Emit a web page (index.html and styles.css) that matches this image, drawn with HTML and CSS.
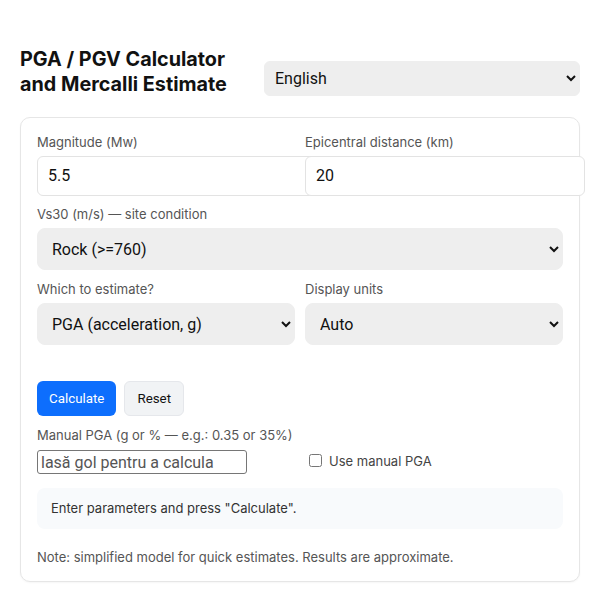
FILE: index.html
```html
<!DOCTYPE html>
<html lang="en">
<head>
<meta charset="utf-8">
<title>PGA / PGV Calculator and Mercalli Estimate</title>
<link rel="stylesheet" href="styles.css">
</head>
<body>
<div class="page">
  <header class="header">
    <h1 class="title">PGA / PGV Calculator and Mercalli Estimate</h1>
    <select class="select lang">
      <option>English</option>
    </select>
  </header>

  <main class="card">
    <div class="grid2">
      <div class="field">
        <label class="label">Magnitude (Mw)</label>
        <input class="input" type="text" value="5.5">
      </div>
      <div class="field">
        <label class="label">Epicentral distance (km)</label>
        <input class="input" type="text" value="20">
      </div>
    </div>

    <div class="field gap-top">
      <label class="label">Vs30 (m/s) — site condition</label>
      <select class="select"><option>Rock (&gt;=760)</option></select>
    </div>

    <div class="grid2 gap-top2">
      <div class="field">
        <label class="label">Which to estimate?</label>
        <select class="select"><option>PGA (acceleration, g)</option></select>
      </div>
      <div class="field">
        <label class="label">Display units</label>
        <select class="select"><option>Auto</option></select>
      </div>
    </div>

    <div class="actions">
      <button class="btn btn-primary" type="button">Calculate</button>
      <button class="btn btn-light" type="button">Reset</button>
    </div>

    <div class="manual">
      <label class="label manual-label">Manual PGA (g or % — e.g.: 0.35 or 35%)</label>
      <input class="manual-input" type="text" placeholder="lasă gol pentru a calcula">
      <label class="check"><input type="checkbox" class="checkbox"> Use manual PGA</label>
    </div>

    <div class="result">Enter parameters and press "Calculate".</div>

    <p class="note">Note: simplified model for quick estimates. Results are approximate.</p>
  </main>
</div>
</body>
</html>
```

FILE: styles.css
```css
* { box-sizing: border-box; }

body {
  margin: 0;
  background: #ffffff;
  color: #111111;
  font-family: Inter, "Noto Sans", "DejaVu Sans", sans-serif;
}

.page {
  padding: 47px 20px 20px 20px;
}

.header {
  display: flex;
  align-items: flex-start;
  gap: 12px;
  margin-bottom: 20px;
}

.title {
  flex: 1;
  margin: 0;
  font-size: 19.8px;
  line-height: 25px;
  font-weight: 700;
  color: #111111;
}

.select {
  font-family: Roboto, "Liberation Sans", sans-serif;
  font-size: 16px;
  color: #111111;
  background-color: #eeeeee;
  border: 1px solid #eeeeee;
  border-radius: 8px;
  height: 42px;
  padding: 0 10px 0 10px;
  width: 100%;
}

.lang {
  width: 316px;
  height: 35px;
  margin-top: 14px;
  padding-left: 6px;
  border-radius: 6px;
}

.card {
  display: block;
  background: #ffffff;
  border: 1px solid #e6e6e6;
  border-radius: 10px;
  padding: 16px;
  box-shadow: 0 1px 2px rgba(0, 0, 0, 0.04);
}

.grid2 {
  display: grid;
  grid-template-columns: 1fr 1fr;
  column-gap: 10px;
}

.field {
  display: flex;
  flex-direction: column;
  min-width: 0;
}

.gap-top {
  margin-top: 10px;
}

.gap-top2 {
  margin-top: 11px;
}

.label {
  display: block;
  font-size: 13px;
  line-height: 16px;
  color: #555555;
  margin-bottom: 6px;
}

.input {
  box-sizing: content-box;
  width: 100%;
  font-family: Roboto, "Liberation Sans", sans-serif;
  font-size: 16px;
  line-height: 18px;
  color: #111111;
  padding: 10px;
  border: 1px solid #e3e3e3;
  border-radius: 6px;
  background: #ffffff;
}

.actions {
  display: flex;
  gap: 8px;
  margin-top: 36px;
}

.btn {
  font-family: Roboto, "Liberation Sans", sans-serif;
  font-size: 13.333px;
  line-height: 15px;
  border-radius: 6px;
  cursor: pointer;
}

.btn-primary {
  background: #0d6efd;
  border: 0;
  padding: 10px 12px;
  color: #ffffff;
}

.btn-light {
  background: #f1f3f5;
  border: 1px solid #e5e7eb;
  padding: 9px 12px;
  color: #111111;
}

.manual {
  display: grid;
  grid-template-columns: 1fr 1fr;
  column-gap: 10px;
  margin-top: 11px;
}

.manual-label {
  grid-column: 1 / 2;
  margin-bottom: 7px;
  white-space: nowrap;
}

.manual-input {
  grid-column: 1 / 2;
  grid-row: 2;
  width: 210px;
  height: 24px;
  font-family: Roboto, "Liberation Sans", sans-serif;
  font-size: 16px;
  color: #111111;
  padding: 1px 3px;
  border: 1px solid #767676;
  border-radius: 3px;
}

.manual-input::placeholder {
  color: #555555;
}

.check {
  grid-column: 2;
  grid-row: 2;
  align-self: center;
  display: flex;
  align-items: center;
  font-size: 13px;
  color: #444444;
  margin-top: -3px;
}

.checkbox {
  width: 13px;
  height: 13px;
  margin: 0 7px 0 4px;
}

.result {
  margin-top: 14px;
  background: #f8fafc;
  border-radius: 8px;
  padding: 12px 14px;
  font-size: 13px;
  line-height: 17px;
  color: #333333;
}

.note {
  margin: 20px 0 0 0;
  font-size: 13px;
  line-height: 16px;
  color: #555555;
}
```
